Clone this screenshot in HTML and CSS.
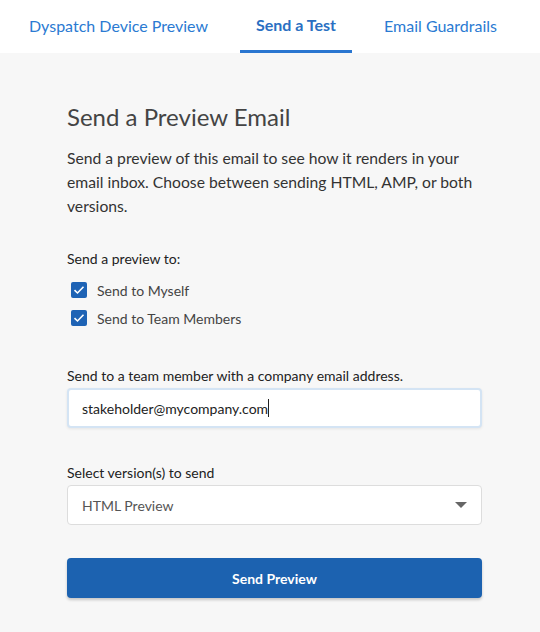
FILE: index.html
```html
<!DOCTYPE html>
<html lang="en">
<head>
    <meta charset="UTF-8">
    <title>Send a Test</title>
    <link rel="stylesheet" href="styles.css">
</head>
<body>
    <nav class="tabs">
        <a href="#" class="tab">Dyspatch Device Preview</a>
        <a href="#" class="tab active">Send a Test</a>
        <a href="#" class="tab">Email Guardrails</a>
    </nav>

    <main class="panel">
        <h1>Send a Preview Email</h1>
        <p class="intro">Send a preview of this email to see how it renders in your email inbox. Choose between sending HTML, AMP, or both versions.</p>

        <!-- Recipients -->
        <div class="field recipients">
            <div class="field-label">Send a preview to:</div>
            <div class="checks">
                <label class="check">
                    <span class="box"><svg width="12" height="10" viewBox="0 0 12 10"><path d="M1.5 5.2 L4.5 8 L10.5 1.8" fill="none" stroke="#fff" stroke-width="1.6"/></svg></span>
                    Send to Myself
                </label>
                <label class="check">
                    <span class="box"><svg width="12" height="10" viewBox="0 0 12 10"><path d="M1.5 5.2 L4.5 8 L10.5 1.8" fill="none" stroke="#fff" stroke-width="1.6"/></svg></span>
                    Send to Team Members
                </label>
            </div>
        </div>

        <div class="field email">
            <div class="field-label">Send to a team member with a company email address.</div>
            <div class="input focus">stakeholder@mycompany.com<span class="caret"></span></div>
        </div>

        <div class="field">
            <div class="field-label">Select version(s) to send</div>
            <div class="input select">
                <span>HTML Preview</span>
                <span class="arrow"></span>
            </div>
        </div>

        <button class="send-btn">Send Preview</button>
    </main>
</body>
</html>
```

FILE: styles.css
```css
/* General */
body {
    margin: 0;
    font-family: 'Lato', 'Open Sans', sans-serif;
    color: #333;
    background-color: #f7f7f7;
}

/* Tabs */
.tabs {
    display: flex;
    gap: 16px;
    background-color: #fff;
    height: 53px;
    padding-left: 13px;
}

.tab {
    display: block;
    padding: 0 16px;
    line-height: 51px;
    font-size: 16px;
    color: #2a7ad2;
    text-decoration: none;
    border-bottom: 2px solid transparent;
}

.tab.active {
    font-weight: bold;
    color: #2a6fc2;
    border-bottom: 3px solid #2a76d0;
    line-height: 50px;
}

/* Panel */
.panel {
    padding: 48px 58px 20px 67px;
}

.panel h1 {
    margin: 0 0 13px;
    font-size: 24px;
    font-weight: normal;
    color: #444;
    line-height: 32px;
}

.intro {
    margin: 0 0 32px;
    font-size: 15.7px;
    line-height: 24px;
    color: #333;
}

.field {
    margin-bottom: 33px;
}

.field.recipients {
    margin-bottom: 35px;
}

.field.email {
    margin-bottom: 36px;
}

.field-label {
    font-size: 14px;
    line-height: 18px;
    color: #222;
    margin-bottom: 3px;
}

.checks {
    margin-top: 8px;
}

.check {
    display: flex;
    align-items: center;
    gap: 10px;
    font-size: 14px;
    color: #444;
    height: 28px;
    margin-left: 4px;
}

.box {
    width: 16px;
    height: 16px;
    border-radius: 2px;
    background-color: #1e63b5;
    display: flex;
    align-items: center;
    justify-content: center;
}

/* Inputs */
.input {
    box-sizing: border-box;
    height: 40px;
    background: #fff;
    border: 1px solid #ddd;
    border-radius: 4px;
    padding: 0 14px;
    font-size: 14px;
    display: flex;
    align-items: center;
    color: #222;
}

.input.focus {
    border: 2px solid #d4e4f4;
    padding-left: 13px;
    box-shadow: 0 1px 3px rgba(0, 0, 0, 0.08);
}

.caret {
    display: inline-block;
    width: 1px;
    height: 18px;
    background: #222;
}

.select {
    justify-content: space-between;
    color: #555;
}

.arrow {
    width: 0;
    height: 0;
    border-left: 6px solid transparent;
    border-right: 6px solid transparent;
    border-top: 6px solid #666;
}

/* Button */
.send-btn {
    display: block;
    width: 100%;
    height: 40px;
    margin-top: 0;
    background-color: #1c62b0;
    color: #fff;
    border: none;
    border-radius: 4px;
    font-family: inherit;
    font-weight: bold;
    font-size: 14px;
    box-shadow: 0 2px 3px rgba(0, 0, 0, 0.2);
}
```
